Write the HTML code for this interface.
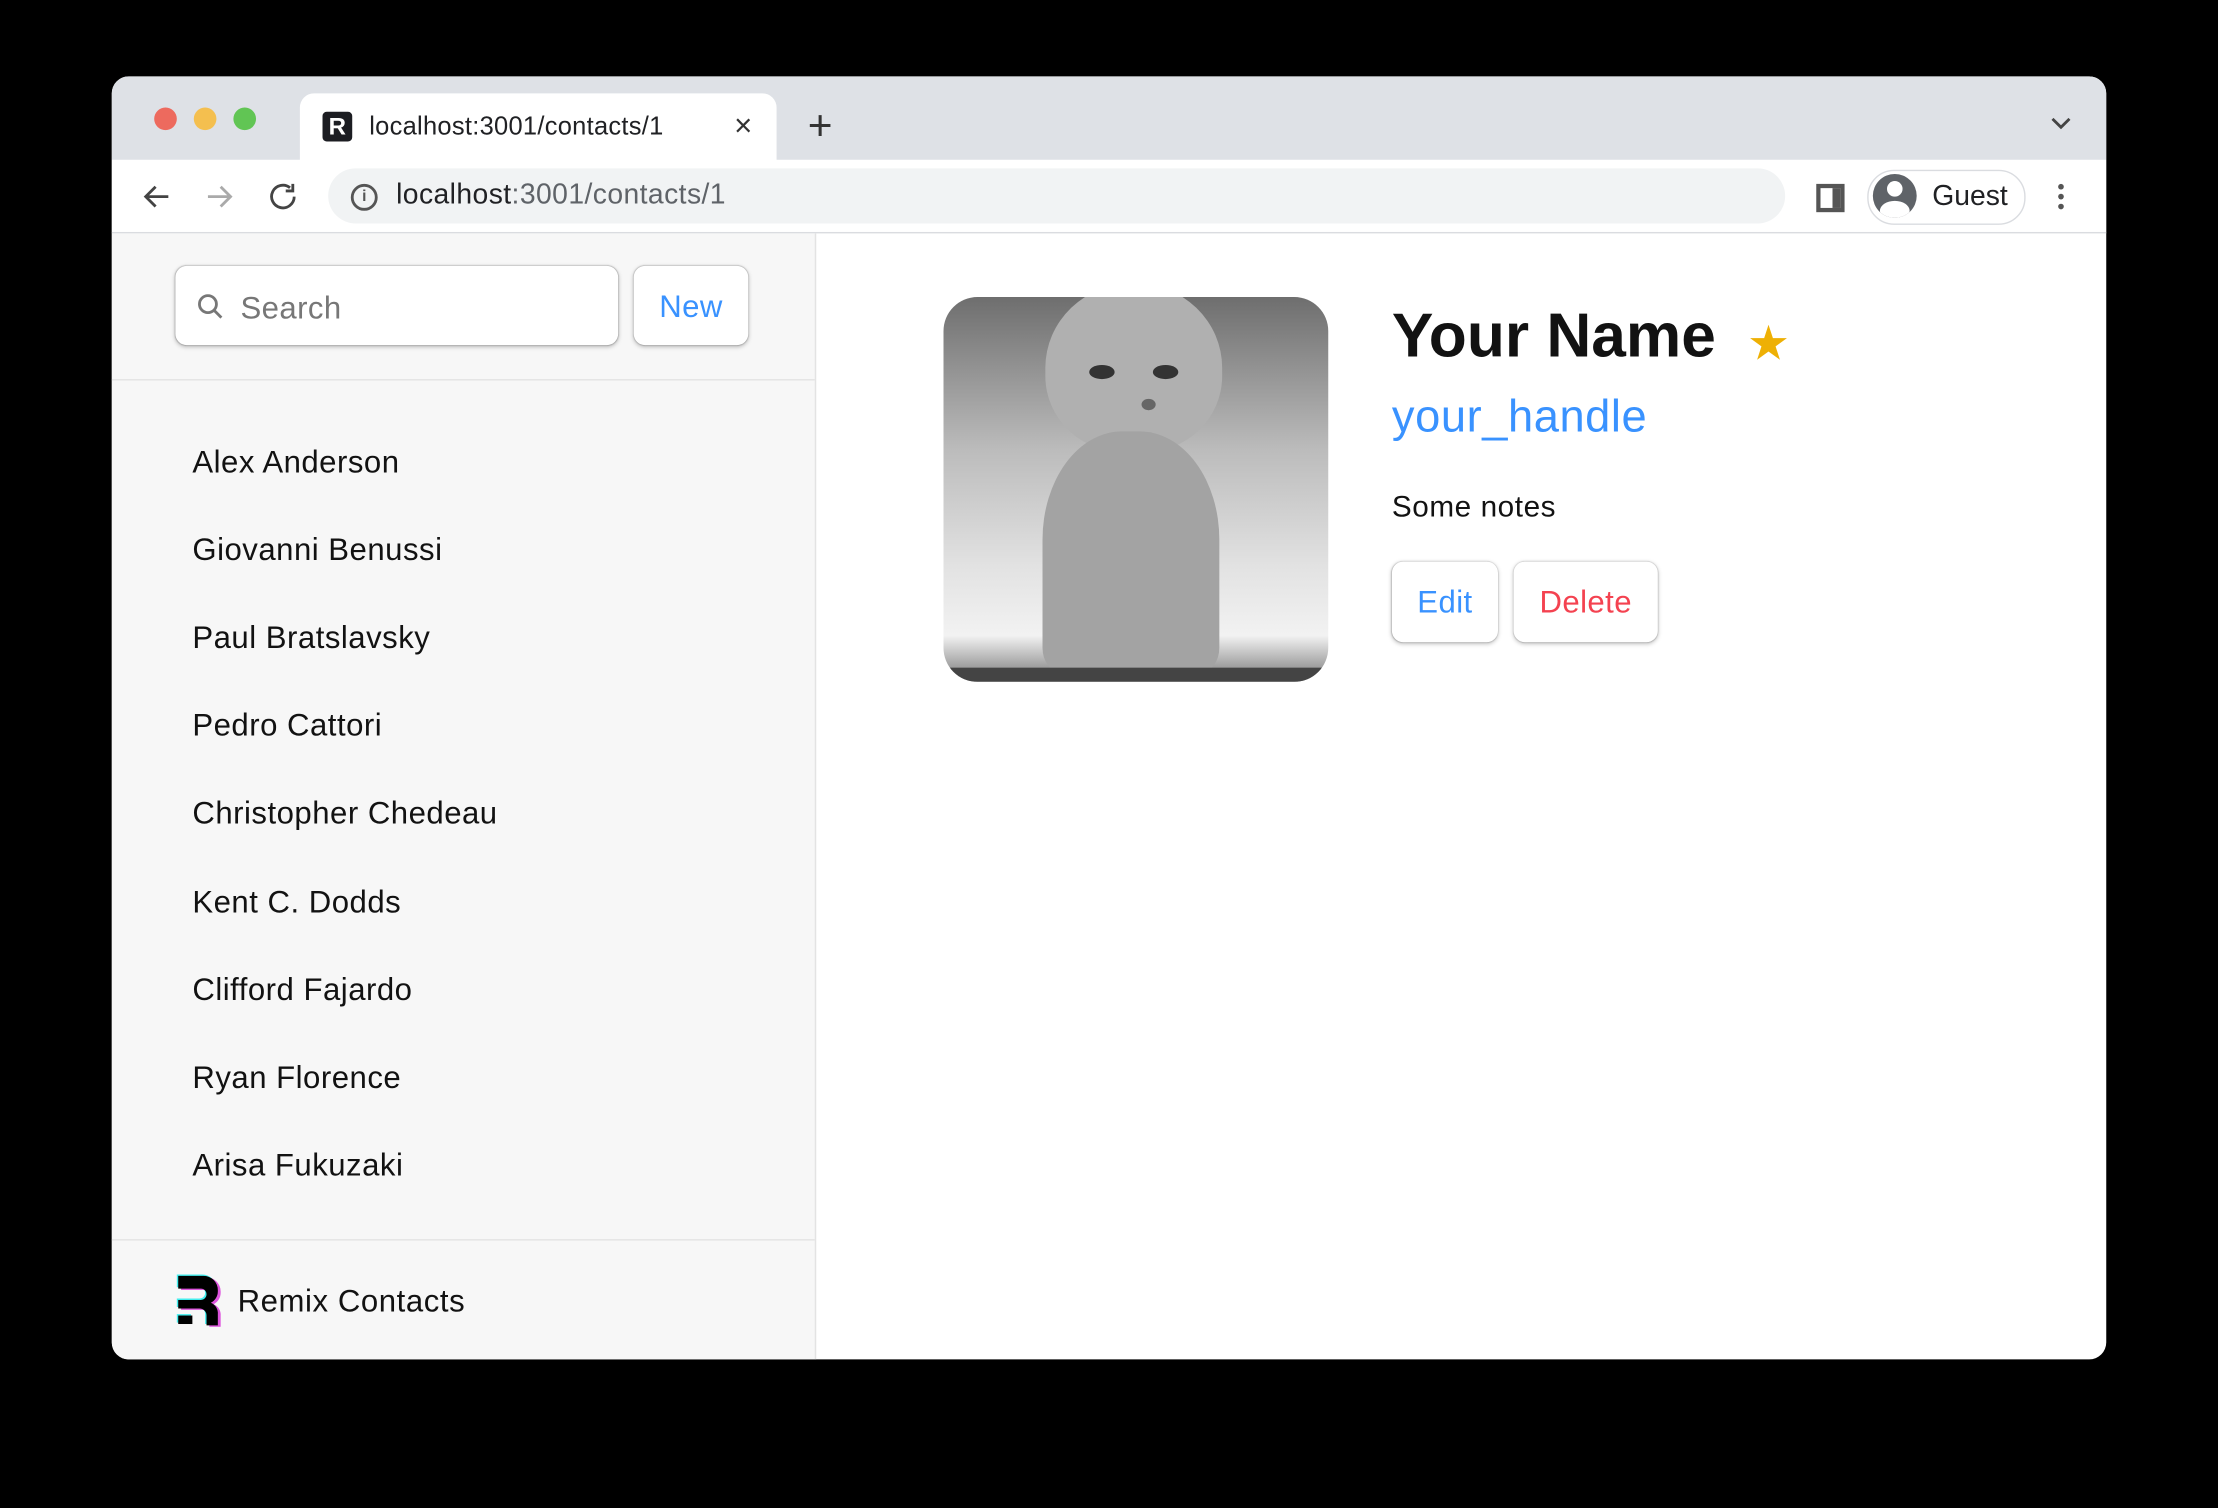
<!DOCTYPE html>
<html><head><meta charset="utf-8"><style>
html,body{margin:0;padding:0;background:#000;width:2218px;height:1508px;overflow:hidden}
#s{position:absolute;left:0;top:0;width:1568px;height:1066px;transform:scale(1.41454);transform-origin:0 0;font-family:"Liberation Sans",sans-serif}
.a{position:absolute}
.win{left:79px;top:54px;width:1410px;height:907px;border-radius:12px;overflow:hidden;background:#fff}
.btn{position:absolute;background:#fff;border-radius:8px;box-shadow:0 0 1px rgba(0,0,0,.3),0 1px 3px rgba(0,0,0,.25);font-size:22px;text-align:center;letter-spacing:.3px}
.li{position:absolute;left:57px;font-size:22px;color:#121212;letter-spacing:.35px}
</style></head><body><div id="s">
<div class="a win">
 <div class="a" style="left:0;top:0;width:1410px;height:59px;background:#dee1e6"></div>
 <div class="a" style="left:30px;top:22px;width:16px;height:16px;border-radius:50%;background:#ed6a5e"></div>
 <div class="a" style="left:58px;top:22px;width:16px;height:16px;border-radius:50%;background:#f4bf4f"></div>
 <div class="a" style="left:86px;top:22px;width:16px;height:16px;border-radius:50%;background:#61c554"></div>
 <div class="a" style="left:133px;top:12px;width:337px;height:50px;background:#fff;border-radius:10px 10px 0 0"></div>
 <div class="a" style="left:149px;top:25px;width:21px;height:21px;background:#1c1d22;border-radius:3px;color:#fff;font-weight:bold;font-size:17px;line-height:21px;text-align:center">R</div>
 <div class="a" style="left:182px;top:25px;font-size:18px;color:#202124;letter-spacing:.2px">localhost:3001/contacts/1</div>
 <div class="a" style="left:440px;top:22px;font-size:22px;color:#333">×</div>
 <div class="a" style="left:492px;top:19px;font-size:30px;color:#333">+</div>
 <svg class="a" style="left:1370px;top:28px" width="16" height="10" viewBox="0 0 16 10" fill="none" stroke="#444" stroke-width="2"><path d="M2 2l6 6 6-6"/></svg>
 <div class="a" style="left:0;top:59px;width:1410px;height:51px;background:#fff;border-bottom:1px solid #dadce0"></div>
 <svg class="a" style="left:20px;top:73px" width="110" height="24" viewBox="0 0 110 24" fill="none" stroke-width="2"><path d="M20 12H4M11 5L4 12l7 7" stroke="#444"/><path d="M48 12h16M57 5l7 7-7 7" stroke="#aaa"/><path d="M109 12a8 8 0 1 1-3-6.3M108 3v5h-5" stroke="#444"/></svg>
 <div class="a" style="left:153px;top:65px;width:1030px;height:39px;background:#f1f3f4;border-radius:20px"></div>
 <div class="a" style="left:169px;top:76px;width:15px;height:15px;border:2px solid #555;border-radius:50%;font-size:11px;line-height:15px;text-align:center;color:#555;font-weight:bold">i</div>
 <div class="a" style="left:201px;top:73px;font-size:20px;color:#202124;letter-spacing:.3px">localhost<span style="color:#5f6368">:3001/contacts/1</span></div>
 <div class="a" style="left:1205px;top:76px;width:14px;height:14px;border:3px solid #555;background:linear-gradient(90deg,#fff 60%,#555 60%)"></div>
 <div class="a" style="left:1241px;top:66px;width:110px;height:37px;border:1px solid #dadce0;border-radius:19px"></div>
 <div class="a" style="left:1245px;top:69px;width:31px;height:31px;border-radius:50%;background:#5f6368;overflow:hidden"><div class="a" style="left:10px;top:5px;width:11px;height:11px;border-radius:50%;background:#fff"></div><div class="a" style="left:5px;top:19px;width:21px;height:14px;border-radius:50%;background:#fff"></div></div>
 <div class="a" style="left:1287px;top:74px;font-size:20px;color:#202124">Guest</div>
 <div class="a" style="left:1376px;top:76px;width:4px;height:4px;border-radius:50%;background:#555;box-shadow:0 7px 0 #555,0 14px 0 #555"></div>
 <!-- sidebar -->
 <div class="a" style="left:0;top:111px;width:497px;height:796px;background:#f7f7f7;border-right:1px solid #e3e3e3"></div>
 <div class="btn" style="left:45px;top:134px;width:313px;height:56px;text-align:left"><svg class="a" style="left:15px;top:19px" width="20" height="20" viewBox="0 0 20 20" fill="none" stroke="#777" stroke-width="2"><circle cx="8" cy="8" r="6"/><path d="M12.5 12.5l5 5"/></svg><span class="a" style="left:46px;top:17px;color:#777">Search</span></div>
 <div class="btn" style="left:369px;top:134px;width:81px;height:56px;line-height:58px;color:#3992ff">New</div>
 <div class="a" style="left:0;top:214px;width:497px;height:1px;background:#e3e3e3"></div>
 <div class="li" style="top:260px">Alex Anderson</div>
 <div class="li" style="top:322px">Giovanni Benussi</div>
 <div class="li" style="top:384px">Paul Bratslavsky</div>
 <div class="li" style="top:446px">Pedro Cattori</div>
 <div class="li" style="top:508px">Christopher Chedeau</div>
 <div class="li" style="top:571px">Kent C. Dodds</div>
 <div class="li" style="top:633px">Clifford Fajardo</div>
 <div class="li" style="top:695px">Ryan Florence</div>
 <div class="li" style="top:757px">Arisa Fukuzaki</div>
 <div class="a" style="left:0;top:822px;width:497px;height:1px;background:#e3e3e3"></div>
 <svg class="a" style="left:44px;top:846px" width="34" height="38" viewBox="0 0 34 38"><g transform="translate(2,1)" fill="#4ee"><path d="M0 0h18a10 10 0 0 1 10 10v1a9 9 0 0 1-5 8 8 8 0 0 1 5 8v8h-8v-7a5 5 0 0 0-5-5H0v-6h16a4 4 0 0 0 0-8H0z"/><rect x="0" y="28" width="10" height="6"/></g><g transform="translate(5,3)" fill="#d5d"><path d="M0 0h18a10 10 0 0 1 10 10v1a9 9 0 0 1-5 8 8 8 0 0 1 5 8v8h-8v-7a5 5 0 0 0-5-5H0v-6h16a4 4 0 0 0 0-8H0z"/></g><g transform="translate(3,2)" fill="#000"><path d="M0 0h18a10 10 0 0 1 10 10v1a9 9 0 0 1-5 8 8 8 0 0 1 5 8v8h-8v-7a5 5 0 0 0-5-5H0v-6h16a4 4 0 0 0 0-8H0z"/><rect x="0" y="28" width="10" height="6"/></g></svg>
 <div class="a" style="left:89px;top:853px;font-size:22px;color:#121212;font-weight:500;letter-spacing:.4px">Remix Contacts</div>
 <!-- main -->
 <div class="a" style="left:588px;top:156px;width:272px;height:272px;border-radius:24px;overflow:hidden;background:linear-gradient(180deg,#6e6e6e 0%,#bcbcbc 40%,#e2e2e2 70%,#f2f2f2 88%,#777 100%)">
  <div class="a" style="left:72px;top:-10px;width:125px;height:120px;border-radius:50% 50% 45% 45%;background:#b0b0b0"></div>
  <div class="a" style="left:70px;top:95px;width:125px;height:170px;border-radius:45% 45% 10% 10%;background:#a3a3a3"></div>
  <div class="a" style="left:103px;top:48px;width:18px;height:10px;border-radius:50%;background:#333"></div>
  <div class="a" style="left:148px;top:48px;width:18px;height:10px;border-radius:50%;background:#333"></div>
  <div class="a" style="left:140px;top:72px;width:10px;height:8px;border-radius:50%;background:#666"></div>
  <div class="a" style="left:0;top:262px;width:272px;height:10px;background:#444"></div>
 </div>
 <div class="a" style="left:905px;top:159px;font-size:44px;font-weight:bold;color:#121212">Your Name</div>
 <div class="a" style="left:1156px;top:169px;font-size:34px;color:#eeb004">★</div>
 <div class="a" style="left:905px;top:222px;font-size:32px;color:#3992ff;letter-spacing:.4px">your_handle</div>
 <div class="a" style="left:905px;top:293px;font-size:21px;color:#121212;letter-spacing:.4px">Some notes</div>
 <div class="btn" style="left:905px;top:343px;width:75px;height:57px;line-height:58px;color:#3992ff">Edit</div>
 <div class="btn" style="left:991px;top:343px;width:102px;height:57px;line-height:58px;color:#f44250">Delete</div>
</div>
</div></body></html>
